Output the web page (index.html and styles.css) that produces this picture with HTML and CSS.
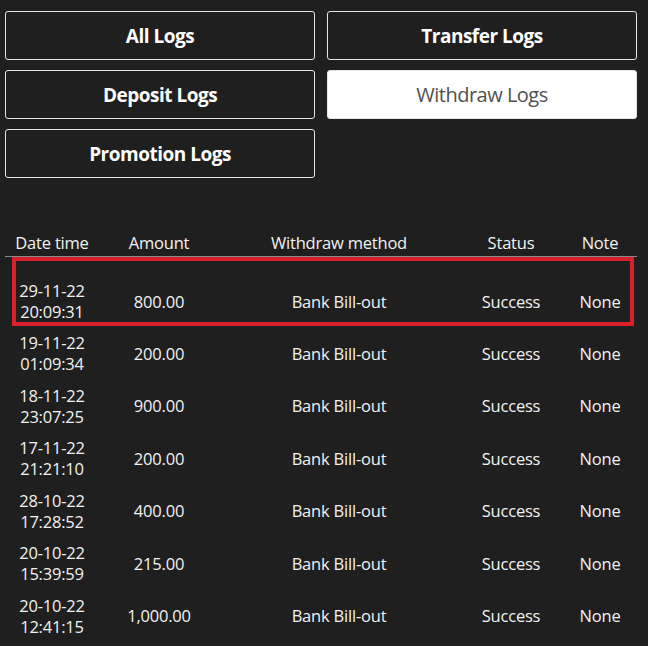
FILE: index.html
```html
<!DOCTYPE html>
<html lang="en">
<head>
    <meta charset="UTF-8">
    <meta name="viewport" content="width=device-width, initial-scale=1.0">
    <title>Withdraw Logs</title>
    <link rel="stylesheet" href="styles.css">
</head>
<body>
    <div class="logs-panel">
        <!-- Log type tabs -->
        <nav class="log-tabs">
            <button class="tab-btn">All Logs</button>
            <button class="tab-btn">Transfer Logs</button>
            <button class="tab-btn">Deposit Logs</button>
            <button class="tab-btn tab-active">Withdraw Logs</button>
            <button class="tab-btn">Promotion Logs</button>
        </nav>

        <!-- Withdraw history -->
        <div class="table-wrap">
            <table class="log-table">
                <thead>
                    <tr>
                        <th class="col-date">Date time</th>
                        <th class="col-amount">Amount</th>
                        <th class="col-method">Withdraw method</th>
                        <th class="col-status">Status</th>
                        <th class="col-note">Note</th>
                    </tr>
                </thead>
                <tbody>
                    <tr class="row-latest">
                        <td>29-11-22<br>20:09:31</td>
                        <td>800.00</td>
                        <td>Bank Bill-out</td>
                        <td>Success</td>
                        <td>None</td>
                    </tr>
                    <tr>
                        <td>19-11-22<br>01:09:34</td>
                        <td>200.00</td>
                        <td>Bank Bill-out</td>
                        <td>Success</td>
                        <td>None</td>
                    </tr>
                    <tr>
                        <td>18-11-22<br>23:07:25</td>
                        <td>900.00</td>
                        <td>Bank Bill-out</td>
                        <td>Success</td>
                        <td>None</td>
                    </tr>
                    <tr>
                        <td>17-11-22<br>21:21:10</td>
                        <td>200.00</td>
                        <td>Bank Bill-out</td>
                        <td>Success</td>
                        <td>None</td>
                    </tr>
                    <tr>
                        <td>28-10-22<br>17:28:52</td>
                        <td>400.00</td>
                        <td>Bank Bill-out</td>
                        <td>Success</td>
                        <td>None</td>
                    </tr>
                    <tr>
                        <td>20-10-22<br>15:39:59</td>
                        <td>215.00</td>
                        <td>Bank Bill-out</td>
                        <td>Success</td>
                        <td>None</td>
                    </tr>
                    <tr>
                        <td>20-10-22<br>12:41:15</td>
                        <td>1,000.00</td>
                        <td>Bank Bill-out</td>
                        <td>Success</td>
                        <td>None</td>
                    </tr>
                </tbody>
            </table>
            <div class="row-marker"></div>
        </div>
    </div>
</body>
</html>
```

FILE: styles.css
```css
:root {
    --bg-color: #1f1f1f;
    --text-color: #f2f2f2;
    --muted-line: #8a8a8a;
    --marker-color: #d8212b;
}

* {
    margin: 0;
    padding: 0;
    box-sizing: border-box;
}

body {
    font-family: 'Open Sans', 'Noto Sans', sans-serif;
    background-color: var(--bg-color);
    color: var(--text-color);
    overflow: hidden;
}

.logs-panel {
    padding: 11px 11px 0 5px;
}

/* Tabs */
.log-tabs {
    display: grid;
    grid-template-columns: 1fr 1fr;
    column-gap: 12px;
    row-gap: 10px;
}

.tab-btn {
    height: 49px;
    background: transparent;
    border: 1px solid #e6e6e6;
    border-radius: 3px;
    color: #fff;
    font-family: inherit;
    font-size: 19px;
    font-weight: 700;
    letter-spacing: -0.5px;
    cursor: pointer;
}

.tab-active {
    background-color: #fff;
    color: #505050;
    font-weight: 400;
    font-size: 20px;
}

/* Table */
.table-wrap {
    position: relative;
    margin-top: 52px;
}

.log-table {
    width: 632px;
    border-collapse: collapse;
    table-layout: fixed;
    font-size: 16.5px;
    letter-spacing: -0.2px;
}

.log-table th {
    font-weight: 400;
    height: 26px;
    padding-top: 1px;
    vertical-align: top;
    border-bottom: 1px solid var(--muted-line);
}

.log-table td {
    text-align: center;
    height: 52.5px;
    line-height: 21px;
}

.log-table .row-latest td {
    height: 71px;
    padding-top: 19px;
}

.col-date { width: 94px; }
.col-amount { width: 120px; }
.col-method { width: 240px; }
.col-status { width: 104px; }
.col-note { width: 74px; }

/* Highlight over the newest entry */
.row-marker {
    position: absolute;
    top: 27px;
    left: 7px;
    width: 622px;
    height: 69px;
    border: 4px solid var(--marker-color);
    pointer-events: none;
}
```
